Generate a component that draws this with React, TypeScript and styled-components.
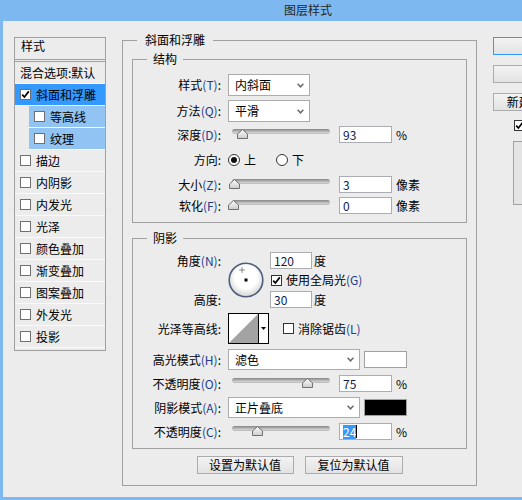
import React from "react";
import styled, { createGlobalStyle } from "styled-components";

interface StyleItem {
  name: string;
  checked?: boolean;
  selected?: boolean;
  sub?: boolean;
}

const styleItems: StyleItem[] = [
  { name: "斜面和浮雕", checked: true, selected: true },
  { name: "等高线", sub: true },
  { name: "纹理", sub: true },
  { name: "描边" },
  { name: "内阴影" },
  { name: "内发光" },
  { name: "光泽" },
  { name: "颜色叠加" },
  { name: "渐变叠加" },
  { name: "图案叠加" },
  { name: "外发光" },
  { name: "投影" },
];

const GlobalStyle = createGlobalStyle`
  html, body {
    margin: 0;
    padding: 0;
    overflow: hidden;
    background: #ececec;
  }
  body {
    font-family: "Noto Sans CJK SC", "Liberation Sans", sans-serif;
    font-size: 12px;
    line-height: 14px;
    color: #000;
  }
`;

const Window = styled.div`
  width: 616px;
  height: 500px;
  box-sizing: border-box;
  padding: 0 3px 3px;
  background: #7db9f0;
  display: flex;
  flex-direction: column;
`;

const TitleBar = styled.div`
  height: 21px;
  flex-shrink: 0;
  line-height: 20px;
  text-align: center;
  color: #262626;
`;

const Body = styled.div`
  flex: 1;
  background: #ececec;
  display: flex;
  align-items: flex-start;
  gap: 16px;
  padding: 12px 0 0 11px;
`;

/* ---- left style list ---- */

const StyleList = styled.div`
  margin-top: 4px;
  width: 92px;
  box-sizing: border-box;
  border: 1px solid #a0a0a0;
  padding-bottom: 2px;
  flex-shrink: 0;
`;

const ListHeader = styled.div`
  height: 21px;
  line-height: 16px;
  padding-left: 6px;
  border-bottom: 3px double #a0a0a0;
`;

const ListItem = styled.div<{ $selected?: boolean; $sub?: boolean; $plain?: boolean }>`
  height: 21px;
  display: flex;
  align-items: center;
  gap: 5px;
  padding-left: 5px;
  margin-left: ${(p) => (p.$sub ? 14 : 0)}px;
  border-bottom: 1px solid #fafafa;
  white-space: nowrap;
  background: ${(p) => (p.$selected ? "#3399ff" : p.$sub ? "#91c4f2" : "transparent")};
`;

const CheckBox = styled.span<{ $dark?: boolean }>`
  width: 11px;
  height: 11px;
  box-sizing: border-box;
  flex-shrink: 0;
  border: 1px solid ${(p) => (p.$dark ? "#333" : "#707070")};
  background: #fff;
  display: inline-flex;
  align-items: center;
  justify-content: center;
`;

const Check: React.FC<{ checked?: boolean; dark?: boolean }> = ({ checked, dark }) => (
  <CheckBox $dark={dark}>
    {checked && (
      <svg width="9" height="9" viewBox="0 0 9 9">
        <path d="M1.2 4.6 L3.4 7 L7.8 1.4" fill="none" stroke="#000" strokeWidth="1.7" />
      </svg>
    )}
  </CheckBox>
);

/* ---- group boxes ---- */

const GroupBox = styled.fieldset<{ $pad: string }>`
  margin: 0;
  min-width: 0;
  border: 1px solid #a0a0a0;
  padding: ${(p) => p.$pad};
`;

const OuterGroup = styled(GroupBox)`
  width: 355px;
  box-sizing: border-box;
  flex-shrink: 0;
`;

const GroupTitle = styled.legend<{ $inset: number; $space: number }>`
  margin-left: ${(p) => p.$inset}px;
  padding: 0 ${(p) => p.$space}px;
  line-height: 14px;
  font-size: 12px;
`;

const FormRow = styled.div<{ $h: number; $mt?: number }>`
  display: flex;
  align-items: center;
  height: ${(p) => p.$h}px;
  margin-top: ${(p) => p.$mt ?? 0}px;
  white-space: nowrap;
`;

const LabelText = styled.span`
  width: 88px;
  margin-right: 7px;
  flex-shrink: 0;
  text-align: right;
  white-space: nowrap;
`;

const Key = styled.span`
  color: #1d3c8f;
`;

const FieldLabel: React.FC<{ text: string; hotkey?: string }> = ({ text, hotkey }) => (
  <LabelText>
    {text}
    {hotkey && <Key>({hotkey})</Key>}:
  </LabelText>
);

const SelectBox = styled.div<{ $w: number }>`
  width: ${(p) => p.$w}px;
  height: 100%;
  box-sizing: border-box;
  border: 1px solid #acacac;
  background: #fff;
  display: flex;
  align-items: center;
  justify-content: space-between;
  padding: 0 5px 0 6px;
  flex-shrink: 0;
`;

const Select: React.FC<{ value: string; width: number }> = ({ value, width }) => (
  <SelectBox $w={width}>
    <span>{value}</span>
    <svg width="7" height="5" viewBox="0 0 7 5">
      <polyline points="0.6,0.8 3.5,3.8 6.4,0.8" fill="none" stroke="#6a6a6a" strokeWidth="1.5" />
    </svg>
  </SelectBox>
);

const SliderWrap = styled.div`
  position: relative;
  width: 106px;
  height: 17px;
  margin-right: 5px;
  flex-shrink: 0;
`;

const SliderTrack = styled.div`
  position: absolute;
  left: 4px;
  right: 4px;
  top: 3px;
  height: 5px;
  border-radius: 3px;
  background: linear-gradient(#858585, #cdcdcd 70%, #b8b8b8);
`;

const Thumb = styled.svg`
  position: absolute;
  top: 3px;
`;

const Slider: React.FC<{ value: number; max: number }> = ({ value, max }) => (
  <SliderWrap>
    <SliderTrack />
    <Thumb width="11" height="10" viewBox="0 0 11 10" style={{ left: Math.round((value / max) * 98) }}>
      <defs>
        <linearGradient id="thumbFill" x1="0" y1="0" x2="0" y2="1">
          <stop offset="0" stopColor="#fcfcfc" />
          <stop offset="1" stopColor="#cccccc" />
        </linearGradient>
      </defs>
      <path d="M5.5 0.5 L10.5 5 V9.5 H0.5 V5 Z" fill="url(#thumbFill)" stroke="#6f6f6f" />
    </Thumb>
  </SliderWrap>
);

const NumberField = styled.div<{ $w: number }>`
  width: ${(p) => p.$w}px;
  height: 17px;
  box-sizing: border-box;
  border: 1px solid #abadb3;
  background: #fff;
  padding-left: 3px;
  display: flex;
  align-items: center;
  color: #0c1c4c;
  flex-shrink: 0;
`;

const Highlight = styled.span`
  background: #3399ff;
  color: #fff;
  line-height: 14px;
`;

const Caret = styled.span`
  width: 1px;
  height: 13px;
  background: #000;
`;

const Unit = styled.span<{ $gap?: number }>`
  margin-left: ${(p) => p.$gap ?? 4}px;
`;

const Radio = styled.span<{ $on?: boolean }>`
  width: 12px;
  height: 12px;
  box-sizing: border-box;
  border: 1px solid #333;
  border-radius: 50%;
  background: #fff;
  display: inline-flex;
  align-items: center;
  justify-content: center;
  &::after {
    content: "";
    width: 6px;
    height: 6px;
    border-radius: 50%;
    background: ${(p) => (p.$on ? "#111" : "transparent")};
  }
`;

const OptionText = styled.span<{ $after?: number }>`
  margin-left: 4px;
  margin-right: ${(p) => p.$after ?? 0}px;
`;

const AngleGrid = styled.div`
  display: grid;
  grid-template-columns: 95px 42px auto;
  grid-template-rows: 17px 22px 17px;
  align-items: center;
  white-space: nowrap;
`;

const GridLabel = styled.span<{ $row: number }>`
  grid-column: 1;
  grid-row: ${(p) => p.$row};
  text-align: right;
  padding-right: 7px;
`;

const DialCell = styled.div`
  grid-column: 2;
  grid-row: 1 / 4;
  width: 36px;
  height: 36px;
`;

const GridCell = styled.div<{ $row: number; $indent?: number }>`
  grid-column: 3;
  grid-row: ${(p) => p.$row};
  display: flex;
  align-items: center;
  padding-left: ${(p) => p.$indent ?? 0}px;
`;

const Swatch = styled.span<{ $color: string }>`
  width: 43px;
  height: 17px;
  box-sizing: border-box;
  margin-left: 4px;
  border: 1px solid #a0a0a0;
  background: ${(p) => p.$color};
`;

const CheckLabel = styled.span`
  margin-left: 4px;
`;

const FooterButtons = styled.div`
  display: flex;
  justify-content: center;
  gap: 11px;
  margin-top: 7px;
`;

const PushButton = styled.button<{ $w?: number }>`
  width: ${(p) => p.$w ?? 97}px;
  height: 18px;
  padding: 0;
  border: 1px solid #acacac;
  background: linear-gradient(#f3f3f3, #e2e2e2);
  font: inherit;
  line-height: 16px;
  color: #000;
`;

/* ---- right column ---- */

const SideColumn = styled.div`
  margin-top: 4px;
  width: 104px;
  flex-shrink: 0;
  display: flex;
  flex-direction: column;
`;

const SideButton = styled(PushButton)<{ $primary?: boolean }>`
  width: 104px;
  margin-bottom: 10px;
  border-color: ${(p) => (p.$primary ? "#3399ff" : "#acacac")};
  white-space: nowrap;
`;

const PreviewToggle = styled.div`
  display: flex;
  align-items: center;
  padding-left: 21px;
  margin-top: -1px;
  height: 11px;
`;

const PreviewBox = styled.div`
  margin: 10px 0 0 20px;
  width: 64px;
  height: 64px;
  box-sizing: border-box;
  border: 1px solid #a0a0a0;
  background: #e4e4e4;
`;

const AngleDial: React.FC = () => (
  <svg width="36" height="36" viewBox="0 0 36 36">
    <defs>
      <radialGradient id="dialFill" cx="50%" cy="42%" r="60%">
        <stop offset="0.55" stopColor="#ffffff" />
        <stop offset="1" stopColor="#cfcfcf" />
      </radialGradient>
    </defs>
    <circle cx="18" cy="18" r="16.8" fill="url(#dialFill)" stroke="#4e5d7c" strokeWidth="1.6" />
    <path d="M14 5.5 V10.5 M11.5 8 H16.5" stroke="#222" strokeWidth="1" strokeDasharray="1 1" />
    <rect x="16.5" y="16.5" width="3" height="3" fill="#000" />
  </svg>
);

const ContourPicker: React.FC = () => (
  <svg width="41" height="31" viewBox="0 0 41 31">
    <rect x="0.5" y="0.5" width="40" height="30" fill="#fff" stroke="#000" />
    <polygon points="1,30 30,1 30,30" fill="#a3a3a3" />
    <line x1="30.5" y1="0" x2="30.5" y2="31" stroke="#000" />
    <polygon points="33,14 38,14 35.5,17" fill="#000" />
  </svg>
);

const LayerStyleDialog: React.FC = () => (
  <Window>
    <TitleBar>图层样式</TitleBar>
    <Body>
      <StyleList>
        <ListHeader>样式</ListHeader>
        <ListItem>混合选项:默认</ListItem>
        {styleItems.map((item) => (
          <ListItem key={item.name} $selected={item.selected} $sub={item.sub}>
            <Check checked={item.checked} />
            <span>{item.name}</span>
          </ListItem>
        ))}
      </StyleList>

      <OuterGroup $pad="5px 9px 11px">
        <GroupTitle $inset={5} $space={8}>斜面和浮雕</GroupTitle>

        <GroupBox $pad="8px 0 8px">
          <GroupTitle $inset={14} $space={6}>结构</GroupTitle>
          <FormRow $h={22}>
            <FieldLabel text="样式" hotkey="T" />
            <Select value="内斜面" width={82} />
          </FormRow>
          <FormRow $h={22} $mt={4}>
            <FieldLabel text="方法" hotkey="Q" />
            <Select value="平滑" width={82} />
          </FormRow>
          <FormRow $h={17} $mt={4}>
            <FieldLabel text="深度" hotkey="D" />
            <Slider value={93} max={1000} />
            <NumberField $w={53}>93</NumberField>
            <Unit>%</Unit>
          </FormRow>
          <FormRow $h={33}>
            <FieldLabel text="方向" />
            <Radio $on />
            <OptionText $after={20}>上</OptionText>
            <Radio />
            <OptionText>下</OptionText>
          </FormRow>
          <FormRow $h={17}>
            <FieldLabel text="大小" hotkey="Z" />
            <Slider value={3} max={250} />
            <NumberField $w={53}>3</NumberField>
            <Unit>像素</Unit>
          </FormRow>
          <FormRow $h={17} $mt={4}>
            <FieldLabel text="软化" hotkey="F" />
            <Slider value={0} max={16} />
            <NumberField $w={53}>0</NumberField>
            <Unit>像素</Unit>
          </FormRow>
        </GroupBox>

        <GroupBox $pad="7px 0 8px" style={{ marginTop: 8 }}>
          <GroupTitle $inset={14} $space={6}>阴影</GroupTitle>
          <AngleGrid>
            <GridLabel $row={1}>
              角度<Key>(N)</Key>:
            </GridLabel>
            <DialCell>
              <AngleDial />
            </DialCell>
            <GridCell $row={1}>
              <NumberField $w={42}>120</NumberField>
              <Unit $gap={2}>度</Unit>
            </GridCell>
            <GridCell $row={2} $indent={1}>
              <Check checked dark />
              <CheckLabel>
                使用全局光<Key>(G)</Key>
              </CheckLabel>
            </GridCell>
            <GridLabel $row={3}>高度:</GridLabel>
            <GridCell $row={3}>
              <NumberField $w={42}>30</NumberField>
              <Unit $gap={2}>度</Unit>
            </GridCell>
          </AngleGrid>
          <FormRow $h={31} $mt={5}>
            <FieldLabel text="光泽等高线" />
            <ContourPicker />
            <span style={{ width: 14 }} />
            <Check dark />
            <CheckLabel>
              消除锯齿<Key>(L)</Key>
            </CheckLabel>
          </FormRow>
          <FormRow $h={21} $mt={5}>
            <FieldLabel text="高光模式" hotkey="H" />
            <Select value="滤色" width={132} />
            <Swatch $color="#ffffff" />
          </FormRow>
          <FormRow $h={17} $mt={5}>
            <FieldLabel text="不透明度" hotkey="O" />
            <Slider value={75} max={100} />
            <NumberField $w={53}>75</NumberField>
            <Unit>%</Unit>
          </FormRow>
          <FormRow $h={21} $mt={5}>
            <FieldLabel text="阴影模式" hotkey="A" />
            <Select value="正片叠底" width={132} />
            <Swatch $color="#000000" />
          </FormRow>
          <FormRow $h={17} $mt={5}>
            <FieldLabel text="不透明度" hotkey="C" />
            <Slider value={24} max={100} />
            <NumberField $w={53}>
              <Highlight>24</Highlight>
              <Caret />
            </NumberField>
            <Unit>%</Unit>
          </FormRow>
        </GroupBox>

        <FooterButtons>
          <PushButton $w={97}>设置为默认值</PushButton>
          <PushButton $w={98}>复位为默认值</PushButton>
        </FooterButtons>
      </OuterGroup>

      <SideColumn>
        <SideButton $primary>确定</SideButton>
        <SideButton>取消</SideButton>
        <SideButton>新建样式(W)...</SideButton>
        <PreviewToggle>
          <Check checked dark />
          <CheckLabel>
            预览<Key>(V)</Key>
          </CheckLabel>
        </PreviewToggle>
        <PreviewBox />
      </SideColumn>
    </Body>
  </Window>
);

const App: React.FC = () => (
  <>
    <GlobalStyle />
    <LayerStyleDialog />
  </>
);

export default App;
